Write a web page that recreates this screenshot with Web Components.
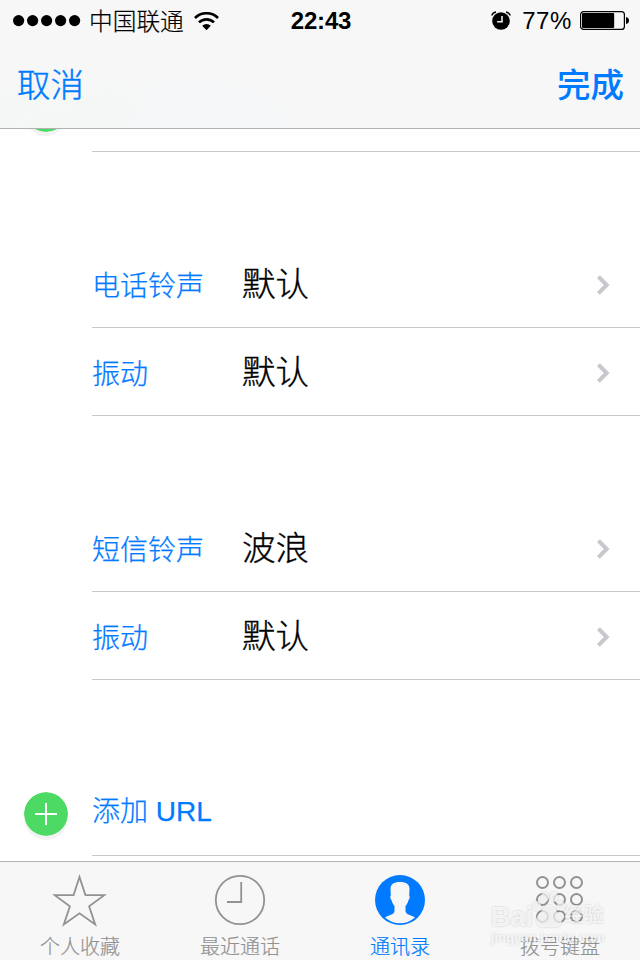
<!DOCTYPE html>
<html lang="zh-CN">
<head>
<meta charset="utf-8">
<title>通讯录</title>
<style>
  html, body {
    margin: 0;
    height: 100%;
  }

  body {
    background: #fff;
    overflow: hidden;
    font-family: "Liberation Sans", "Noto Sans CJK SC", sans-serif;
    -webkit-font-smoothing: antialiased;
  }
</style>
</head>
<body>
<phone-screen>
  <status-bar slot="top" carrier="中国联通" time="22:43" battery="77"></status-bar>
  <nav-bar slot="top">
    <span slot="left">取消</span>
    <span slot="right">完成</span>
  </nav-bar>

  <cell-group>
    <add-cell></add-cell>
  </cell-group>
  <cell-group>
    <detail-cell label="电话铃声">默认</detail-cell>
    <detail-cell label="振动">默认</detail-cell>
  </cell-group>
  <cell-group>
    <detail-cell label="短信铃声">波浪</detail-cell>
    <detail-cell label="振动">默认</detail-cell>
  </cell-group>
  <cell-group>
    <add-cell>添加 URL</add-cell>
  </cell-group>

  <tab-bar slot="bottom">
    <tab-item icon="star">个人收藏</tab-item>
    <tab-item icon="clock">最近通话</tab-item>
    <tab-item icon="person" selected>通讯录</tab-item>
    <tab-item icon="keypad">拨号键盘</tab-item>
  </tab-bar>
  <water-mark slot="overlay"></water-mark>
</phone-screen>

<script>
class BaseElement extends HTMLElement {
  connectedCallback() {
    if (this.shadowRoot) return
    this.attachShadow({mode: 'open'})
    this.shadowRoot.innerHTML = this.render()
  }
}

class PhoneScreen extends BaseElement {
  render() {
    return `
      <style>
        :host {
          display: flex;
          flex-direction: column;
          position: relative;
          width: 640px;
          height: 960px;
          overflow: hidden;
          background: #fff;
          --tint: #007aff;
          --bar: #f7f7f7;
          --bar-line: #b2b2b2;
          --line: #c8c7cc;
        }
        header {
          flex: none;
          height: 128px;
          border-bottom: 1px solid var(--bar-line);
          background:
            radial-gradient(ellipse 120px 80px at 50px 130px, #f4f8f5, transparent),
            radial-gradient(ellipse 140px 70px at 190px 130px, #f5f7fa, transparent),
            var(--bar);
        }
        /* scrolled so that the first row is mostly under the header */
        main {
          flex: 1;
          min-height: 0;
          overflow: hidden;
          display: flex;
          flex-direction: column;
          justify-content: flex-end;
          gap: 88px;
          padding-bottom: 5px;
        }
      </style>
      <header><slot name="top"></slot></header>
      <main><slot></slot></main>
      <slot name="bottom"></slot>
      <slot name="overlay"></slot>
    `
  }
}

class StatusBar extends BaseElement {
  render() {
    const level = Number(this.getAttribute('battery'))
    const dots = [0, 1, 2, 3, 4].map(i => `<circle cx="${5.6 + i * 14}" cy="5.6" r="5.6"/>`).join('')
    return `
      <style>
        :host {
          display: grid;
          grid-template-columns: 1fr auto 1fr;
          align-items: center;
          height: 40px;
          padding: 0 11px 0 13px;
          color: #000;
          font-size: 24px;
          line-height: 40px;
        }
        div { display: flex; align-items: center; }
        .right { justify-content: flex-end; }
        svg { display: block; flex: none; }
        .carrier {
          margin: 2px 10px 0 8px;
          font-size: 23.7px;
          font-weight: 300;
          -webkit-text-stroke: 0.2px;
        }
        .time { font-weight: bold; letter-spacing: -0.2px; }
        .percent { margin: 0 8px 0 11px; letter-spacing: 0.6px; }
      </style>
      <div>
        <svg width="68" height="12">${dots}</svg>
        <span class="carrier">${this.getAttribute('carrier')}</span>
        <svg width="25" height="19" viewBox="0 0 25 19">
          <g fill="none" stroke="#000" stroke-width="2.7">
            <path d="M1 6a16.3 16.3 0 0 1 23 0"/>
            <path d="M5 10.4a10.6 10.6 0 0 1 15 0"/>
          </g>
          <path d="M8.2 13.7a6.1 6.1 0 0 1 8.6 0l-4.3 4.5z"/>
        </svg>
      </div>
      <span class="time">${this.getAttribute('time')}</span>
      <div class="right">
        <svg width="20" height="20" viewBox="0 0 20 20">
          <circle cx="10" cy="10" r="8.8"/>
          <path d="M.7 4.5Q1.8 1.6 5 1M15 1q3.2.6 4.3 3.5" fill="none" stroke="#000" stroke-width="1.4"/>
          <path d="M11 5v5.7H6.2" fill="none" stroke="#f7f7f7" stroke-width="1.5"/>
        </svg>
        <span class="percent">${level}%</span>
        <svg width="49" height="20" viewBox="0 0 49 20">
          <rect x=".6" y=".6" width="43.8" height="17.8" rx="3" fill="none" stroke="#000" stroke-width="1.2"/>
          <rect x="2" y="2" width="${41 * level / 100 + 0.6}" height="15" rx="1"/>
          <path d="M46 6q3 .5 3 3.5t-3 3.500z"/>
        </svg>
      </div>
    `
  }
}

class NavBar extends BaseElement {
  render() {
    return `
      <style>
        :host {
          display: flex;
          justify-content: space-between;
          align-items: center;
          box-sizing: border-box;
          height: 88px;
          padding: 4px 16px 0 17px;
          color: var(--tint);
          font-size: 33.5px;
          line-height: 84px;
        }
        .left { font-weight: 300; -webkit-text-stroke: 0.4px; }
        .right { font-weight: 500; }
      </style>
      <span class="left"><slot name="left"></slot></span>
      <span class="right"><slot name="right"></slot></span>
    `
  }
}

class CellGroup extends BaseElement {
  render() {
    return `
      <style>
        :host { display: block; flex: none; }
      </style>
      <slot></slot>
    `
  }
}

class DetailCell extends BaseElement {
  render() {
    return `
      <style>
        :host {
          display: flex;
          align-items: center;
          box-sizing: border-box;
          height: 88px;
          margin-left: 92px;
          padding-right: 30px;
          border-bottom: 1px solid var(--line);
          font-weight: 300;
          line-height: 80px;
          -webkit-text-stroke: 0.25px;
        }
        .label { width: 150px; padding-top: 7px; color: var(--tint); font-size: 28px; }
        .value { flex: 1; padding-top: 3px; color: #000; font-size: 33.5px; -webkit-text-stroke: 0.35px; }
        svg { display: block; margin-top: 2px; }
      </style>
      <span class="label">${this.getAttribute('label')}</span>
      <span class="value"><slot></slot></span>
      <svg width="14" height="20" viewBox="0 0 14 20" fill="none" stroke="#c7c7cc" stroke-width="4">
        <path d="M2.4 1.7 10.7 10l-8.3 8.3"/>
      </svg>
    `
  }
}

class AddCell extends BaseElement {
  render() {
    return `
      <style>
        :host {
          display: flex;
          height: 88px;
          line-height: 88px;
        }
        .icon { width: 92px; padding: 24px 0 0 24px; box-sizing: border-box; }
        .icon svg { display: block; width: 44px; border-radius: 50%; box-shadow: 0 4px 0 #f2f2f2; }
        .text {
          flex: 1;
          box-sizing: border-box;
          height: 88px;
          border-bottom: 1px solid var(--line);
          color: var(--tint);
          font-size: 28px;
          font-weight: 300;
          -webkit-text-stroke: 0.25px;
        }
      </style>
      <div class="icon">
        <svg width="44" height="44" viewBox="0 0 44 44">
          <circle cx="22" cy="22" r="22" fill="#4cd964"/>
          <path d="M11 22h22M22 11v22" stroke="#fff" stroke-width="2"/>
        </svg>
      </div>
      <div class="text"><slot></slot></div>
    `
  }
}

class TabBar extends BaseElement {
  render() {
    return `
      <style>
        :host {
          flex: none;
          display: grid;
          grid-template-columns: repeat(4, 1fr);
          height: 98px;
          border-top: 1px solid var(--bar-line);
          background: var(--bar);
        }
      </style>
      <slot></slot>
    `
  }
}

const keys = [9.5, 26.5, 43.5].map(y => [8.5, 25.5, 42.5].map(x => `<circle cx="${x}" cy="${y}" r="5.5"/>`).join('')).join('')

const ICONS = {
  star: `<path d="M25.5 4l5.900 18.100h18.900L35.100 33.400l6.100 18.100L25.500 40.300 9.800 51.500l6.100-18.100L.7 22.100h18.900z" stroke-width="1.8"/>`,
  clock: `<circle cx="26" cy="27" r="24.2" stroke-width="1.8"/><path d="M27.2 9v20H13" stroke-width="1.8"/>`,
  person: `<circle cx="26" cy="27" r="25" fill="currentColor" stroke="none"/>
    <path d="M26 9C19.700 9 16.400 11.600 16.500 16L16.800 22.500C15.900 23 16.300 26.300 17.500 27.100 18 29.800 19 31.400 20.500 33V38C20.500 42 14 42 11 44.500 20 52.300 32 52.300 41 44.500 38 42 31.500 42 31.500 38V33C33 31.400 34 29.800 34.500 27.100 35.700 26.300 36.100 23 35.200 22.500L35.500 16C35.600 11.600 32.300 9 26 9Z" fill="#f7f7f7" stroke="none"/>`,
  keypad: `<g stroke-width="2">${keys}</g>`
}

class TabItem extends BaseElement {
  render() {
    return `
      <style>
        :host {
          display: flex;
          flex-direction: column;
          align-items: center;
          padding-top: 11px;
          color: #929292;
          font-size: 20px;
          font-weight: 300;
          line-height: 37px;
          -webkit-text-stroke: 0.2px;
        }
        :host([selected]) { color: var(--tint); }
        svg { display: block; margin-bottom: 2px; overflow: visible; }
      </style>
      <svg width="52" height="54" viewBox="0 0 52 54" fill="none" stroke="currentColor">${ICONS[this.getAttribute('icon')]}</svg>
      <span><slot></slot></span>
    `
  }
}

class WaterMark extends BaseElement {
  render() {
    return `
      <style>
        :host {
          position: absolute;
          left: 491px;
          top: 890px;
          color: rgba(255, 255, 255, 0.7);
          white-space: nowrap;
        }
        /* translucent letters with a faint grey rim */
        .logo, .site { filter: drop-shadow(0 0 1px rgba(0, 0, 0, 0.25)); }
        .logo { display: flex; align-items: flex-end; height: 40px; font-weight: bold; font-size: 27px; line-height: 25px; }
        .logo svg { margin: 0 -2px 1px -1px; }
        .logo small { font-size: 20px; line-height: 29px; font-weight: 500; }
        .site { font-size: 13px; line-height: 15px; font-weight: bold; }
      </style>
      <div class="logo">
        <span>Bai</span>
        <svg width="34" height="38" viewBox="0 0 34 38" fill="currentColor">
          <ellipse cx="5" cy="15" rx="4" ry="5"/><ellipse cx="13" cy="6" rx="4" ry="5"/>
          <ellipse cx="22" cy="6" rx="4" ry="5"/><ellipse cx="29" cy="15" rx="4" ry="5"/>
          <path d="M17 14c-5 0-6 6-10 9s-4 13 3 13h14c7 0 7-10 3-13s-5-9-10-9z"/>
        </svg>
        <small>经验</small>
      </div>
      <div class="site">jingyan.baidu.com</div>
    `
  }
}

customElements.define('phone-screen', PhoneScreen)
customElements.define('status-bar', StatusBar)
customElements.define('nav-bar', NavBar)
customElements.define('cell-group', CellGroup)
customElements.define('detail-cell', DetailCell)
customElements.define('add-cell', AddCell)
customElements.define('tab-bar', TabBar)
customElements.define('tab-item', TabItem)
customElements.define('water-mark', WaterMark)
</script>
</body>
</html>
